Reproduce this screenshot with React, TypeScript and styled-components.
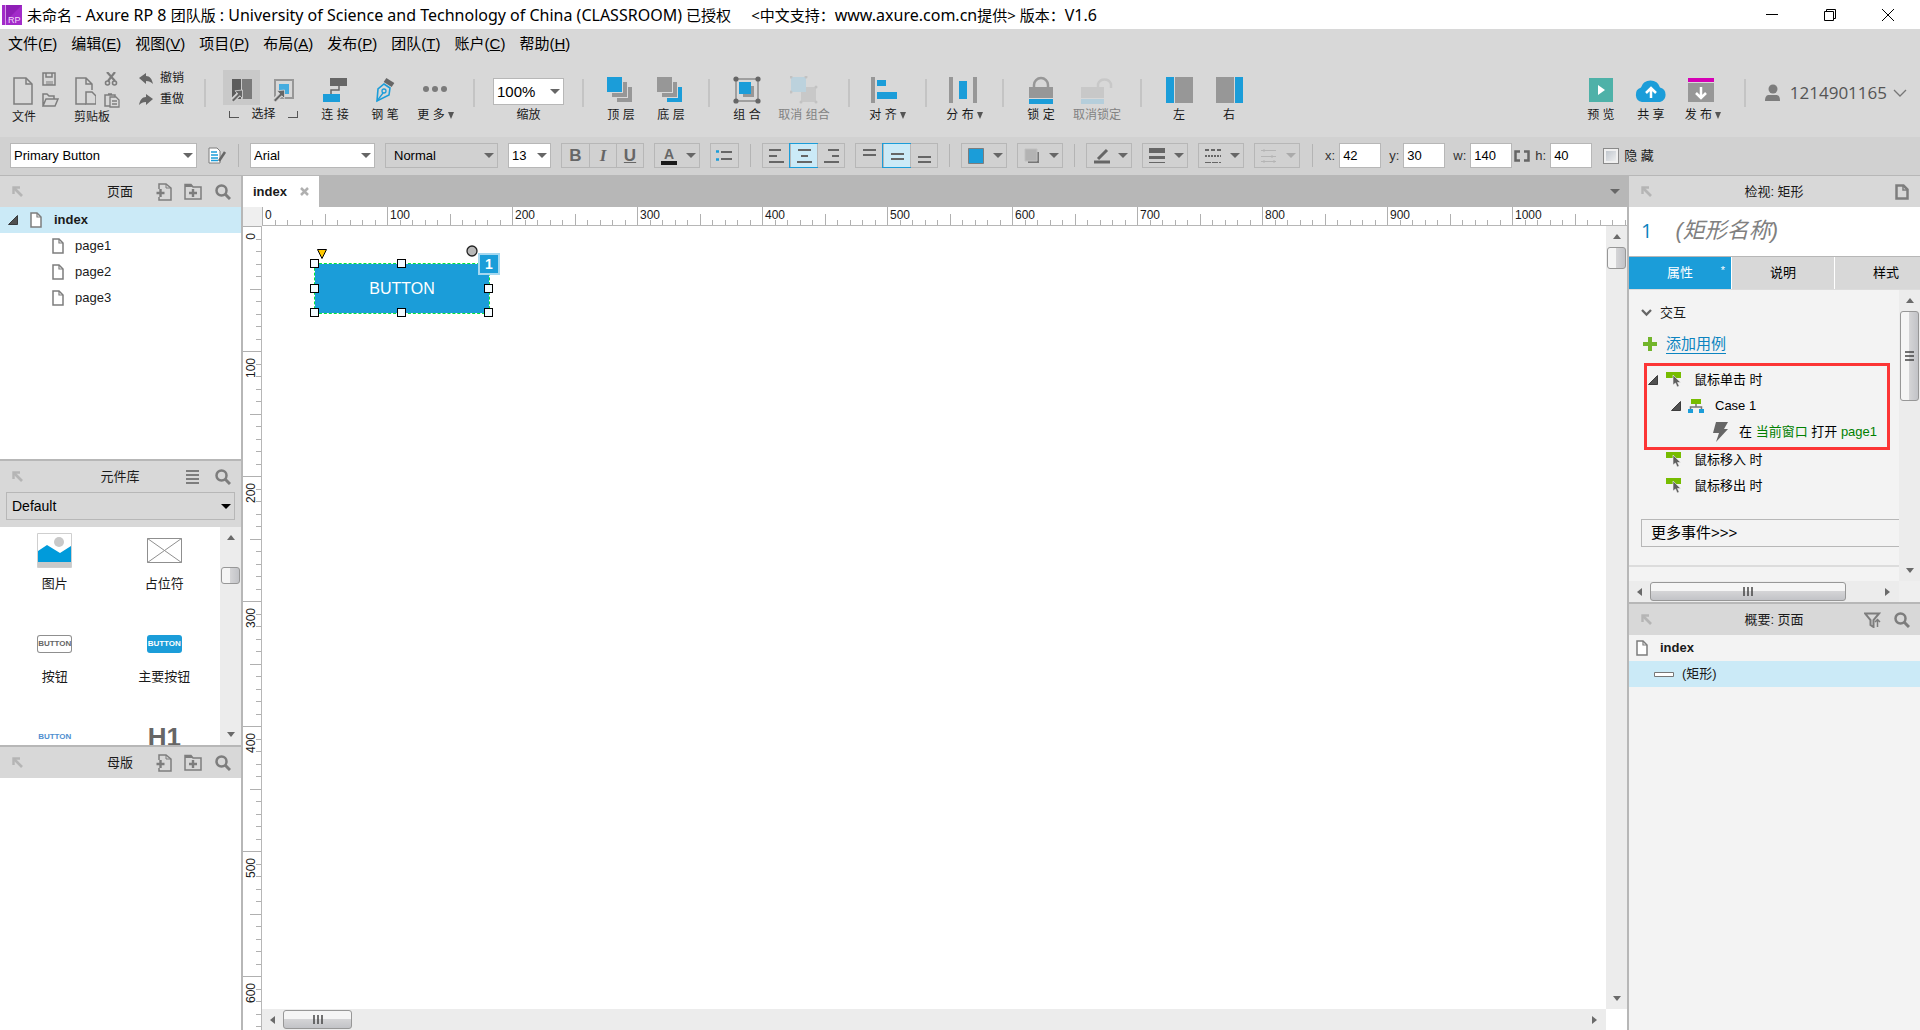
import React, { useEffect, useState } from "react";
import styled, { createGlobalStyle, css } from "styled-components";

const C = {
  bar: "#d8d8d8",
  format: "#d1d1d1",
  line: "#b7b7b7",
  blue: "#1b9dd9",
  pale: "#cbeaf7",
  grey: "#979797",
  dark: "#666666",
  mid: "#7d7d7d",
  soft: "#f3f3f3",
  green: "#76bc00",
};

const Global = createGlobalStyle`
  *, *::before, *::after { box-sizing: border-box; }
  body { margin: 0; background: #fff; }
  body, button, input, select {
    font-family: "Liberation Sans", "Noto Sans CJK SC", sans-serif;
    font-size: 13px;
    line-height: 20px;
    color: #1a1a1a;
  }
  button { border: 0; padding: 0; margin: 0; background: none; display: block; }
  svg { display: block; flex: none; }
`;

/* ---------- frame ---------- */
const Window = styled.div`
  display: flex;
  flex-direction: column;
  height: 100vh;
  overflow: hidden;
`;
const TitleBar = styled.header`
  display: flex;
  align-items: center;
  height: 29px;
  flex: none;
  padding: 0 3px 0 2px;
  background: #fff;
`;
const Title = styled.h1`
  margin: 0 0 0 5px;
  font: 400 15px/28px "Noto Sans", "Noto Sans CJK SC", sans-serif;
  color: #000;
  white-space: pre;
  flex: 1;
`;
const Latin = styled.span`
  font-size: 16px;
  line-height: 20px;
`;
const TitleNote = styled.span`
  margin-left: 20px;
`;
const WindowButton = styled.button`
  width: 58px;
  height: 28px;
  display: grid;
  place-items: center;
`;
const MenuBar = styled.nav`
  display: flex;
  gap: 14px;
  height: 31px;
  flex: none;
  padding: 0 8px;
  background: ${C.bar};
`;
const MenuItem = styled.button`
  height: 29px;
  font-size: 15px;
  line-height: 29px;
  white-space: nowrap;
  color: #000;
`;

/* ---------- tool bar ---------- */
const ToolBar = styled.div`
  display: flex;
  height: 77px;
  flex: none;
  padding: 0 13px 0 12px;
  background: ${C.bar};
`;
const Spring = styled.div`
  flex: 1;
`;
const Divider = styled.div<{ $x?: number }>`
  width: 2px;
  height: 28px;
  margin: 19px ${(p) => p.$x ?? 12}px 0;
  background: #c4c4c4;
  flex: none;
`;
const Tool = styled.button<{ $w?: number; $off?: boolean }>`
  display: flex;
  flex-direction: column;
  align-items: center;
  width: ${(p) => p.$w ?? 50}px;
  height: 77px;
  padding-top: 14px;
  font-size: 12px;
  line-height: 18px;
  white-space: nowrap;
  flex: none;
  color: ${(p) => (p.$off ? "#828282" : "#1a1a1a")};
`;
const ToolIcon = styled.span`
  display: grid;
  place-items: center;
  height: 32px;
`;
const ToolLabel = styled.span`
  display: flex;
  align-items: center;
  gap: 3px;
`;
const FileGroup = styled.div<{ $w: number }>`
  width: ${(p) => p.$w}px;
  padding-top: 8px;
  flex: none;
  font-size: 12px;
  line-height: 18px;
`;
const FileIcons = styled.div`
  display: flex;
  gap: 8px;
  height: 40px;
  align-items: flex-end;
`;
const IconStack = styled.div`
  display: flex;
  flex-direction: column;
  gap: 6px;
`;
const HistoryGroup = styled.div`
  width: 48px;
  padding-top: 8px;
  flex: none;
`;
const HistoryButton = styled.button`
  display: flex;
  align-items: center;
  gap: 7px;
  height: 21px;
  font-size: 12px;
  line-height: 21px;
  white-space: nowrap;
`;
const SelectGroup = styled.div`
  width: 80px;
  padding-top: 10px;
  margin-right: 7px;
  flex: none;
`;
const SelectModes = styled.div`
  display: flex;
  gap: 5px;
`;
const ModeButton = styled.button<{ $on?: boolean }>`
  width: 37px;
  height: 35px;
  display: grid;
  place-items: center;
  background: ${(p) => (p.$on ? "#c9c9c9" : "transparent")};
`;
const SelectCaption = styled.div`
  display: flex;
  justify-content: space-between;
  align-items: center;
  width: 69px;
  margin-left: 6px;
  font-size: 12px;
  line-height: 18px;
`;
const Bracket = styled.span<{ $right?: boolean }>`
  width: 10px;
  height: 7px;
  border-bottom: 1px solid #555;
  ${(p) => (p.$right ? css`border-right: 1px solid #555;` : css`border-left: 1px solid #555;`)}
`;
const ZoomGroup = styled.label`
  display: flex;
  flex-direction: column;
  align-items: center;
  width: 71px;
  padding-top: 18px;
  margin: 0 6px;
  flex: none;
  font-size: 12px;
  line-height: 20px;
`;
const Account = styled.button`
  display: flex;
  align-items: center;
  gap: 6px;
  height: 65px;
  font: 400 17px/24px "Open Sans", sans-serif;
  color: #555;
`;
const AccountName = styled.span`
  margin-left: 2px;
`;

/* ---------- format bar ---------- */
const FormatBar = styled.div`
  display: flex;
  align-items: center;
  height: 39px;
  flex: none;
  padding: 0 10px 1px;
  gap: 10px;
  background: ${C.format};
  border-bottom: 1px solid ${C.line};
`;
const FormatRule = styled.div<{ $wide?: boolean }>`
  width: 1px;
  height: 23px;
  margin: 0 ${(p) => (p.$wide ? 2 : 1)}px;
  background: #b4b4b4;
`;
const Combo = styled.span<{ $w: number; $h?: number; $plain?: boolean; $fill?: boolean }>`
  display: grid;
  width: ${(p) => (p.$fill ? "100%" : `${p.$w}px`)};
  height: ${(p) => p.$h ?? 25}px;
  border: 1px solid ${C.line};
  background: ${(p) => (p.$plain ? "transparent" : "#fff")};
  flex: none;
  align-items: center;
`;
const ComboField = styled.select<{ $size?: number; $pad?: number }>`
  grid-area: 1 / 1;
  width: 100%;
  height: 100%;
  appearance: none;
  border: 0;
  background: none;
  padding: 0 0 0 ${(p) => p.$pad ?? 3}px;
  font-size: ${(p) => p.$size ?? 13}px;
  color: #000;
`;
const Caret = styled.span<{ $c?: string }>`
  width: 0;
  height: 0;
  border: 5px solid transparent;
  border-top-color: ${(p) => p.$c ?? C.dark};
  border-bottom: 0;
  flex: none;
`;
const ComboCaret = styled(Caret)`
  grid-area: 1 / 1;
  justify-self: end;
  margin-right: 3px;
  pointer-events: none;
`;
const SmallCaret = styled.span`
  border: 3px solid transparent;
  border-top: 7px solid #555;
  border-bottom: 0;
`;
const Segments = styled.div`
  display: flex;
  height: 25px;
  border: 1px solid ${C.line};
`;
const Segment = styled.button<{ $on?: boolean }>`
  width: 27px;
  height: 23px;
  display: grid;
  place-items: center;
  font-size: 17px;
  font-weight: 700;
  line-height: 23px;
  color: ${C.dark};
  & + & { border-left: 1px solid ${C.line}; }
  ${(p) =>
    p.$on &&
    css`
      background: ${C.pale};
      outline: 1px solid ${C.blue};
    `}
`;
const Serif = styled.i`
  font-family: "Liberation Serif", serif;
`;
const DropTool = styled.button`
  display: flex;
  align-items: center;
  justify-content: space-between;
  width: 46px;
  height: 25px;
  padding: 0 3px 0 6px;
  border: 1px solid ${C.line};
  flex: none;
`;
const Coord = styled.label`
  display: flex;
  align-items: center;
  gap: 4px;
  margin-right: -2px;
  color: #333;
`;
const CoordField = styled.input`
  width: 42px;
  height: 25px;
  border: 1px solid ${C.line};
  background: #fff;
  padding: 0 0 0 3px;
  color: #000;
`;
const Ratio = styled.span`
  margin: 0 -5px 0 -6px;
`;
const Hide = styled.label`
  display: flex;
  align-items: center;
  gap: 5px;
  margin-left: 3px;
  white-space: nowrap;
`;
const Tick = styled.input`
  appearance: none;
  width: 16px;
  height: 16px;
  margin: 0;
  border: 1px solid #8a8a8a;
  outline: 2px solid #f0f0f0;
  outline-offset: -3px;
  background: linear-gradient(135deg, #b9c0c8, #f4f4f4);
`;

/* ---------- panels ---------- */
const Work = styled.main`
  display: flex;
  flex: 1;
  min-height: 0;
`;
const Side = styled.aside<{ $right?: boolean }>`
  display: flex;
  flex-direction: column;
  width: ${(p) => (p.$right ? 293 : 243)}px;
  flex: none;
  background: ${(p) => (p.$right ? C.soft : "#fff")};
  ${(p) => (p.$right ? css`border-left: 2px solid ${C.line};` : css`border-right: 2px solid ${C.line};`)}
`;
const Panel = styled.section<{ $h?: number }>`
  display: flex;
  flex-direction: column;
  min-height: 0;
  overflow: hidden;
  ${(p) => (p.$h ? css`height: ${p.$h}px; flex: none; border-bottom: 2px solid ${C.line};` : css`flex: 1;`)}
`;
const PanelHead = styled.div`
  display: grid;
  grid-template-columns: 1fr auto 1fr;
  align-items: center;
  height: 31px;
  flex: none;
  padding: 0 9px 0 8px;
  background: ${C.bar};
  > svg { margin-left: 4px; }
`;
const PanelTitle = styled.h2`
  margin: 0;
  font-size: 13px;
  font-weight: 400;
  line-height: 20px;
`;
const HeadTools = styled.div`
  display: flex;
  justify-content: flex-end;
  gap: 12px;
`;
const HeadButton = styled.button`
  width: 18px;
  height: 18px;
  display: grid;
  place-items: center;
`;
const TreeRow = styled.div<{ $level?: number; $on?: boolean; $bold?: boolean; $gap?: number }>`
  display: flex;
  align-items: center;
  gap: ${(p) => p.$gap ?? 11}px;
  height: 26px;
  flex: none;
  padding-left: ${(p) => p.$level ?? 8}px;
  background: ${(p) => (p.$on ? C.pale : "transparent")};
  font-weight: ${(p) => (p.$bold ? 700 : 400)};
  white-space: nowrap;
`;
const LibraryPick = styled.div`
  padding: 0 6px 7px;
  background: ${C.bar};
`;
const LibraryBody = styled.div`
  display: flex;
  flex: 1;
  min-height: 0;
`;
const LibraryGrid = styled.div`
  display: grid;
  grid-template-columns: 1fr 1fr;
  grid-auto-rows: 61px;
  row-gap: 32px;
  flex: 1;
  padding: 6px 1px 0 0;
  overflow: hidden;
`;
const LibraryItem = styled.button`
  display: flex;
  flex-direction: column;
  align-items: center;
  gap: 6px;
  line-height: 20px;
`;
const LibraryIcon = styled.span`
  display: grid;
  place-items: center;
  height: 35px;
`;
const MiniButton = styled.span<{ $kind: "plain" | "primary" | "link" }>`
  width: 35px;
  height: 18px;
  border-radius: 3px;
  font-size: 8px;
  font-weight: 700;
  line-height: 18px;
  text-align: center;
  ${(p) => p.$kind === "plain" && css`box-shadow: inset 0 0 0 1px #8f8f8f; color: #666;`}
  ${(p) => p.$kind === "primary" && css`background: ${C.blue}; color: #fff;`}
  ${(p) => p.$kind === "link" && css`color: #4f8fd0;`}
`;
const Heading1 = styled.span`
  font-size: 26px;
  font-weight: 700;
  color: #666;
`;

/* ---------- scroll bars ---------- */
const Scroll = styled.div<{ $across?: boolean }>`
  display: flex;
  flex: none;
  background: #ececec;
  ${(p) =>
    p.$across
      ? css`height: 21px; padding: 0 1px; align-items: center;`
      : css`width: 21px; flex-direction: column; align-items: center;`}
`;
const ScrollButton = styled.button`
  width: 20px;
  height: 21px;
  display: grid;
  place-items: center;
  flex: none;
`;
const Thumb = styled.div<{ $len: number; $gap?: number; $across?: boolean }>`
  display: grid;
  place-items: center;
  border: 1px solid #979797;
  border-radius: 3px;
  flex: none;
  ${(p) =>
    p.$across
      ? css`
          width: ${p.$len}px;
          height: 19px;
          margin-left: ${p.$gap ?? 0}px;
          background: linear-gradient(#f5f5f5 0 45%, #d4d4d6 50%, #c2c3c7);
        `
      : css`
          height: ${p.$len}px;
          width: 19px;
          margin-top: ${p.$gap ?? 0}px;
          background: linear-gradient(90deg, #f5f5f5 0 45%, #d4d4d6 50%, #c2c3c7);
        `}
`;
const ScrollCorner = styled.div`
  background: #efefef;
`;

/* ---------- canvas ---------- */
const Center = styled.section`
  display: flex;
  flex-direction: column;
  flex: 1;
  min-width: 0;
`;
const TabStrip = styled.div`
  display: flex;
  align-items: center;
  height: 31px;
  flex: none;
  padding-right: 7px;
  background: ${C.line};
`;
const PageTab = styled.div`
  display: flex;
  align-items: center;
  gap: 13px;
  height: 31px;
  padding: 0 10px;
  background: #fff;
  font-weight: 700;
`;
const Board = styled.div`
  display: grid;
  grid-template-columns: 19px 1fr 21px;
  grid-template-rows: 19px 1fr 21px;
  flex: 1;
  min-height: 0;
`;
const RulerAcross = styled.div`
  grid-area: 1 / 2 / 2 / 4;
  display: flex;
  overflow: hidden;
  border-bottom: 1px solid ${C.line};
`;
const RulerDown = styled.div`
  grid-area: 2 / 1 / 4 / 2;
  display: flex;
  flex-direction: column;
  overflow: hidden;
  border-right: 1px solid ${C.line};
`;
const RulerCell = styled.div<{ $down?: boolean }>`
  display: grid;
  flex: none;
  font-size: 12px;
  line-height: 12px;
  ${(p) => (p.$down ? css`height: 125px; width: 18px;` : css`width: 125px; height: 18px;`)}
  > * { grid-area: 1 / 1; }
`;
const RulerLabel = styled.span<{ $down?: boolean }>`
  ${(p) =>
    p.$down
      ? css`
          writing-mode: vertical-rl;
          transform: rotate(180deg);
          justify-self: start;
          align-self: start;
          margin: 7px 0 0 2px;
        `
      : css`
          justify-self: start;
          align-self: start;
          margin: 2px 0 0 3px;
        `}
`;
const Canvas = styled.div`
  grid-area: 2 / 2;
  position: relative;
  overflow: hidden;
  background: #fff;
`;
const Shape = styled.div`
  position: absolute;
  left: 53px;
  top: 38px;
  width: 174px;
  height: 49px;
  background: ${C.blue};
  outline: 1px dashed #00e83a;
  color: #fff;
  font-size: 16px;
  line-height: 50px;
  text-align: center;
`;
const Handle = styled.span<{ $x: string; $y: string }>`
  position: absolute;
  left: ${(p) => p.$x};
  top: ${(p) => p.$y};
  width: 9px;
  height: 9px;
  margin: -5px 0 0 -5px;
  border: 1px solid #000;
  background: #f4fbff;
`;
const Note = styled.span`
  position: absolute;
  left: 163px;
  top: -11px;
  width: 22px;
  height: 22px;
  border: 2px solid #a5d8f0;
  background: ${C.blue};
  font-size: 14px;
  font-weight: 700;
  line-height: 18px;
`;
const Knob = styled.svg<{ $x: number; $y: number }>`
  position: absolute;
  left: ${(p) => p.$x}px;
  top: ${(p) => p.$y}px;
`;
const ScrollSlot = styled.div<{ $across?: boolean }>`
  display: grid;
  grid-area: ${(p) => (p.$across ? "3 / 2" : "2 / 3")};
`;

/* ---------- inspector ---------- */
const NameRow = styled.label`
  display: flex;
  align-items: center;
  gap: 20px;
  height: 50px;
  flex: none;
  padding: 0 0 2px 12px;
  background: #fff;
  border-bottom: 1px solid ${C.line};
  font: 400 20px/30px "Open Sans", sans-serif;
  color: #0c84c0;
`;
const NameField = styled.input`
  width: 200px;
  height: 36px;
  border: 0;
  padding: 0 0 0 3px;
  background: none;
  font-size: 22px;
  font-style: italic;
  line-height: 36px;
  &::placeholder { color: #808080; opacity: 1; }
`;
const Tabs = styled.div`
  display: flex;
  gap: 1px;
  height: 33px;
  flex: none;
  overflow: hidden;
  border-bottom: 1px solid #dcdcdc;
  background: #fff;
`;
const TabButton = styled.button<{ $on?: boolean }>`
  display: grid;
  grid-template-columns: 1fr auto 1fr;
  align-items: center;
  width: 102px;
  flex: none;
  line-height: 32px;
  background: ${(p) => (p.$on ? C.blue : C.bar)};
  color: ${(p) => (p.$on ? "#fff" : "#000")};
`;
const Star = styled.sup`
  justify-self: end;
  align-self: start;
  padding-right: 6px;
  line-height: 26px;
`;
const InspectorBody = styled.div`
  display: flex;
  flex: 1;
  min-height: 0;
`;
const InspectorMain = styled.div`
  display: flex;
  flex-direction: column;
  flex: 1;
  min-width: 0;
`;
const InspectorScroll = styled.div`
  display: grid;
  grid-template-rows: 1fr 21px;
  width: 21px;
  flex: none;
`;
const Properties = styled.div`
  flex: 1;
  padding-top: 12px;
  overflow: hidden;
`;
const SectionRow = styled.h3`
  display: flex;
  align-items: center;
  gap: 8px;
  height: 22px;
  margin: 0 0 9px 12px;
  font-size: 13px;
  font-weight: 400;
`;
const AddCase = styled.a`
  display: flex;
  align-items: center;
  gap: 9px;
  width: max-content;
  height: 22px;
  margin: 0 0 8px 14px;
  font-size: 15px;
  line-height: 18px;
  color: #0c84c0;
  text-decoration: none;
`;
const LinkText = styled.span`
  border-bottom: 1px solid #0c84c0;
`;
const Highlight = styled.div`
  width: 246px;
  height: 87px;
  margin: 0 0 -3px 15px;
  padding: 1px 0 2px;
  border: 3px solid #fc3535;
`;
const CaseText = styled.span<{ $gap?: number }>`
  margin-left: ${(p) => p.$gap ?? 0}px;
  color: #000;
`;
const Em = styled.span`
  color: #008000;
`;
const MoreEvents = styled.button`
  width: 100%;
  height: 28px;
  margin: 20px 0 18px 12px;
  padding-left: 9px;
  border: 1px solid ${C.line};
  font-size: 15px;
  line-height: 26px;
  text-align: left;
  color: #000;
`;
const Rule = styled.div`
  height: 2px;
  background: #dcdcdc;
`;

/* ---------- icons ---------- */
type SvgProps = { w: number; h: number; children: React.ReactNode };
const Svg = ({ w, h, children }: SvgProps) => (
  <svg width={w} height={h} viewBox={`0 0 ${w} ${h}`} fill="none" aria-hidden="true">
    {children}
  </svg>
);
const Arrow = ({ d }: { d: "up" | "down" | "left" | "right" }) => {
  const path = {
    up: "M0 6 L4 1 L8 6Z",
    down: "M0 1 L4 6 L8 1Z",
    left: "M6 0 L1 4 L6 8Z",
    right: "M1 0 L6 4 L1 8Z",
  }[d];
  return (
    <Svg w={8} h={8}>
      <path d={path} fill="#6a6a6a" />
    </Svg>
  );
};
const PageIcon = () => (
  <Svg w={12} h={16}>
    <path d="M1 1h6l4 4v10H1z" fill="#fff" stroke={C.mid} strokeWidth="1.5" />
    <path d="M7 1v4h4" stroke={C.mid} strokeWidth="1.2" />
  </Svg>
);
const DockIcon = () => (
  <Svg w={11} h={11}>
    <path d="M1.5 8V1.5H8" stroke="#b5b5b5" strokeWidth="2.4" />
    <path d="M2 2l8 8" stroke="#b5b5b5" strokeWidth="2.6" />
  </Svg>
);
const SearchIcon = () => (
  <Svg w={16} h={16}>
    <circle cx="6.5" cy="6.5" r="5" stroke={C.mid} strokeWidth="2.5" />
    <path d="M10 10l5 5" stroke={C.mid} strokeWidth="3" />
  </Svg>
);
const AddPageIcon = () => (
  <Svg w={17} h={18}>
    <path d="M4 6V1h7l5 4v12H4v-3" stroke={C.mid} strokeWidth="1.5" />
    <path d="M11 1v4h5" stroke={C.mid} />
    <path d="M5.5 6v8M1.5 10h8" stroke={C.mid} strokeWidth="2.4" />
  </Svg>
);
const AddFolderIcon = () => (
  <Svg w={18} h={17}>
    <path d="M1 16V1.5h6l2 2.5h8v12z" stroke={C.mid} strokeWidth="1.5" />
    <path d="M1 3h7" stroke={C.mid} strokeWidth="2" />
    <path d="M9 6v8M5 10h8" stroke={C.mid} strokeWidth="2.4" />
  </Svg>
);
const Tri = () => (
  <Svg w={10} h={10}>
    <path d="M9.5 .5v9H.5z" fill="#505050" stroke="#222" strokeWidth=".8" />
  </Svg>
);
const EventIcon = () => (
  <Svg w={16} h={16}>
    <path d="M0 0h15v6H0z" fill={C.green} />
    <path d="M7 3v10l2.5-2 1.7 4 2-1-1.7-3.5h3.2z" fill="#5f5f5f" stroke="#f3f3f3" strokeWidth=".6" />
  </Svg>
);
const CaseIcon = () => (
  <Svg w={16} h={15}>
    <path d="M3 0h10v5H3z" fill={C.green} />
    <path d="M8 5v3M2.5 11V8h11v3" stroke="#777" strokeWidth="1.5" />
    <path d="M0 10h5v4H0zM11 10h5v4h-5z" fill={C.blue} />
  </Svg>
);
const DiagCursor = ({ y }: { y: number }) => (
  <g transform={`translate(0 ${y})`}>
    <path d="M1 12L8 5" stroke="#d8d8d8" strokeWidth="5" />
    <path d="M11.5 1v8.5L8.7 6.7 2.5 13 .5 11l6.3-6.2L4 1.8z" fill={C.dark} stroke="#d8d8d8" strokeWidth=".8" />
  </g>
);
const Lines = ({ rows }: { rows: [number, number, number][] }) => (
  <Svg w={17} h={16}>
    {rows.map(([x, y, w]) => (
      <path key={y} d={`M${x} ${y}h${w}`} stroke={C.dark} strokeWidth="2" />
    ))}
  </Svg>
);
const Copies = ({ top, under }: { top: string; under: string }) => (
  <Svg w={28} h={26}>
    <path d="M0 0h15v15H0z" fill={top} />
    <path d="M16 5h4v15H5v-4h11z" fill={C.grey} />
    <path d="M21 10h4v15H10v-4h11z" fill={under} />
  </Svg>
);
const Grip = ({ down }: { down?: boolean }) => (
  <Svg w={10} h={10}>
    {[1, 5, 9].map((n) => (
      <path key={n} d={down ? `M0 ${n}h9` : `M${n} 0v9`} stroke="#444" strokeWidth="1.5" />
    ))}
  </Svg>
);

/* ---------- pieces ---------- */
const menus = [
  ["文件", "F"], ["编辑", "E"], ["视图", "V"], ["项目", "P"], ["布局", "A"],
  ["发布", "P"], ["团队", "T"], ["账户", "C"], ["帮助", "H"],
];

type ToolButtonProps = { label: string; w?: number; off?: boolean; drop?: boolean; children: React.ReactNode };
const ToolButton = ({ label, w, off, drop, children }: ToolButtonProps) => (
  <Tool $w={w} $off={off}>
    <ToolIcon>{children}</ToolIcon>
    <ToolLabel>
      {label}
      {drop && <SmallCaret />}
    </ToolLabel>
  </Tool>
);

type PickProps = {
  id: string; value: string; w: number; h?: number; size?: number;
  pad?: number; plain?: boolean; fill?: boolean; caret?: string;
};
const Pick = ({ id, value, w, h, size, pad, plain, fill, caret }: PickProps) => (
  <Combo $w={w} $h={h} $plain={plain} $fill={fill}>
    <ComboField id={id} aria-label={id} $size={size} $pad={pad} defaultValue={value}>
      <option>{value}</option>
    </ComboField>
    <ComboCaret $c={caret} />
  </Combo>
);

const Drop = ({ name, off, children }: { name: string; off?: boolean; children: React.ReactNode }) => (
  <DropTool aria-label={name}>
    {children}
    <Caret $c={off ? "#aaa" : C.dark} />
  </DropTool>
);

const Head = ({ title, children }: { title: string; children: React.ReactNode }) => (
  <PanelHead>
    <DockIcon />
    <PanelTitle>{title}</PanelTitle>
    <HeadTools>{children}</HeadTools>
  </PanelHead>
);

const Bar = ({ across, len, gap, grip }: { across?: boolean; len: number; gap?: number; grip?: boolean }) => (
  <Scroll $across={across}>
    <ScrollButton aria-label="back"><Arrow d={across ? "left" : "up"} /></ScrollButton>
    <Thumb $across={across} $len={len} $gap={gap}>{grip && <Grip down={!across} />}</Thumb>
    <Spring />
    <ScrollButton aria-label="forward"><Arrow d={across ? "right" : "down"} /></ScrollButton>
  </Scroll>
);

const CELL = 125;
const steps = Array.from({ length: 10 }, (_, i) => i);
const tickLength = (i: number) => (i === 0 ? 18 : i === 5 ? 11 : 5);
const RulerSegment = ({ value, down }: { value: number; down?: boolean }) => (
  <RulerCell $down={down}>
    <Svg w={down ? 18 : CELL} h={down ? CELL : 18}>
      {steps.map((i) => {
        const at = Math.round((i * CELL) / 10) + 0.5;
        const from = 18 - tickLength(i);
        return <path key={i} d={down ? `M${from} ${at}H18` : `M${at} ${from}V18`} stroke="#b0b0b0" />;
      })}
    </Svg>
    <RulerLabel $down={down}>{value}</RulerLabel>
  </RulerCell>
);

// Number of ruler segments that fit beside the panels and below the bars.
const countCells = () => ({
  across: Math.max(1, Math.ceil((window.innerWidth - 555) / CELL)),
  down: Math.max(1, Math.ceil((window.innerHeight - 226) / CELL)),
});
const range = (n: number) => Array.from({ length: n }, (_, i) => i * 100);

const handles = [
  ["0%", "0%"], ["50%", "0%"], ["0%", "50%"], ["100%", "50%"],
  ["0%", "100%"], ["50%", "100%"], ["100%", "100%"],
];

const coords = [["x", "42"], ["y", "30"], ["w", "140"], ["h", "40"]];

export default function App() {
  const [cells, setCells] = useState(countCells);
  useEffect(() => {
    const update = () => setCells(countCells());
    window.addEventListener("resize", update);
    return () => window.removeEventListener("resize", update);
  }, []);

  return (
    <Window>
      <Global />
      <TitleBar>
        <Svg w={20} h={20}>
          <path d="M0 0h20v20H0z" fill="#a22bc9" />
          <path d="M4 0h16L4 16z" fill="#8f1fb6" />
          <path d="M3.5 0v20" stroke="#d59be6" />
          <text x="6" y="18" fontFamily="Liberation Sans" fontSize="9" fill="#f3dcfa">RP</text>
        </Svg>
        <Title>
          未命名<Latin> - Axure RP 8 </Latin>团队版
          <Latin> : University of Science and Technology of China (CLASSROOM) </Latin>已授权
          <TitleNote>
            &lt;中文支持：<Latin>www.axure.com.cn</Latin>提供&gt; 版本：<Latin>V1.6</Latin>
          </TitleNote>
        </Title>
        <WindowButton aria-label="minimize">
          <Svg w={12} h={12}><path d="M0 5.5h12" stroke="#000" /></Svg>
        </WindowButton>
        <WindowButton aria-label="restore">
          <Svg w={12} h={12}><path d="M.5 2.5h9v9h-9zM2.5 2.5v-2h9v9h-2" stroke="#000" /></Svg>
        </WindowButton>
        <WindowButton aria-label="close">
          <Svg w={12} h={12}><path d="M0 0l12 12M12 0L0 12" stroke="#000" /></Svg>
        </WindowButton>
      </TitleBar>

      <MenuBar>
        {menus.map(([name, key]) => (
          <MenuItem key={name}>{name}(<u>{key}</u>)</MenuItem>
        ))}
      </MenuBar>

      <ToolBar>
        <FileGroup $w={62}>
          <FileIcons>
            <Svg w={22} h={34}>
              <path d="M2 4h12l6 6v20H2z" stroke={C.mid} strokeWidth="1.5" />
              <path d="M14 4v6h6" stroke={C.mid} strokeWidth="1.5" />
            </Svg>
            <IconStack>
              <Svg w={17} h={15}>
                <path d="M1 1h12v12H1zM4 1v4h6V1" stroke={C.mid} strokeWidth="1.5" />
                <path d="M4 10h7M4 12h7" stroke={C.mid} />
              </Svg>
              <Svg w={17} h={15}>
                <path d="M1 13V1h4l2 2h5v3M1 13l3-7h12l-3 7z" stroke={C.mid} strokeWidth="1.5" />
              </Svg>
            </IconStack>
          </FileIcons>
          文件
        </FileGroup>
        <FileGroup $w={65}>
          <FileIcons>
            <Svg w={22} h={34}>
              <path d="M12 30H2V4h10l6 6v6M12 4v6h6" stroke={C.mid} strokeWidth="1.5" />
              <path d="M12 18h6l4 4v8H12z" stroke={C.mid} strokeWidth="1.5" />
            </Svg>
            <IconStack>
              <Svg w={16} h={15}>
                <path d="M3 0l8 9M11 0L4 9" stroke={C.mid} strokeWidth="2.2" />
                <circle cx="3.5" cy="11" r="2" stroke={C.mid} strokeWidth="1.6" />
                <circle cx="10.5" cy="11" r="2" stroke={C.mid} strokeWidth="1.6" />
              </Svg>
              <Svg w={16} h={15}>
                <path d="M6 13H1V2h10v2M4 1h4" stroke={C.mid} strokeWidth="1.5" />
                <path d="M6 4h6l3 3v7H6zM8 8h5M8 11h5" stroke={C.mid} strokeWidth="1.3" />
              </Svg>
            </IconStack>
          </FileIcons>
          剪贴板
        </FileGroup>
        <HistoryGroup>
          <HistoryButton>
            <Svg w={14} h={12}><path d="M0 5l7-5v3c4 0 6 3 7 8-2-2-4-3-7-3v3z" fill={C.dark} /></Svg>
            撤销
          </HistoryButton>
          <HistoryButton>
            <Svg w={14} h={12}><path d="M14 5L7 0v3C3 3 1 6 0 11c2-2 4-3 7-3v3z" fill={C.dark} /></Svg>
            重做
          </HistoryButton>
        </HistoryGroup>
        <Divider $x={17} />
        <SelectGroup>
          <SelectModes>
            <ModeButton $on aria-label="相交选择">
              <Svg w={22} h={28}>
                <path d="M1 5h9v20H1z" fill="#5c5c5c" /><path d="M11 5h10v20H11z" fill="#7a7a7a" />
                <DiagCursor y={15} />
              </Svg>
            </ModeButton>
            <ModeButton aria-label="包含选择">
              <Svg w={22} h={28}>
                <path d="M2 6h18v18H2z" stroke={C.grey} strokeWidth="2" />
                <path d="M6 10h10v10H6z" fill="#45acdf" />
                <DiagCursor y={15} />
              </Svg>
            </ModeButton>
          </SelectModes>
          <SelectCaption><Bracket />选择<Bracket $right /></SelectCaption>
        </SelectGroup>
        <ToolButton label="连 接">
          <Svg w={26} h={24}>
            <path d="M8 0h17v8H8z" fill={C.dark} /><path d="M1 16h17v8H1z" fill={C.blue} />
            <path d="M17 8v4H9v4" stroke={C.dark} strokeWidth="1.5" />
          </Svg>
        </ToolButton>
        <ToolButton label="钢 笔">
          <Svg w={20} h={26}>
            <path d="M2 24L3 12l6-5 6 4-1 7z" stroke={C.blue} strokeWidth="1.6" />
            <path d="M2 24l6-8" stroke={C.blue} strokeWidth="1.3" />
            <circle cx="9" cy="14" r="2" stroke={C.blue} strokeWidth="1.3" />
            <path d="M10 3l8 5" stroke={C.dark} strokeWidth="5" />
          </Svg>
        </ToolButton>
        <ToolButton label="更 多" w={51} drop>
          <Svg w={28} h={8}>
            {[4, 13, 22].map((x) => <circle key={x} cx={x} cy="3" r="3" fill="#7b7b7b" />)}
          </Svg>
        </ToolButton>
        <Divider />
        <ZoomGroup>
          <Pick id="zoom" value="100%" w={71} h={27} size={15} />
          缩放
        </ZoomGroup>
        <Divider />
        <ToolButton label="顶 层"><Copies top={C.blue} under={C.grey} /></ToolButton>
        <ToolButton label="底 层"><Copies top={C.grey} under={C.blue} /></ToolButton>
        <Divider />
        <ToolButton label="组 合">
          <Svg w={28} h={28}>
            <path d="M3 3h22v22H3z" stroke={C.dark} />
            <path d="M10 10h11v11H10z" fill={C.grey} /><path d="M6 6h12v12H6z" fill={C.blue} />
            {[3, 25].map((x) => [3, 25].map((y) => <circle key={`${x}-${y}`} cx={x} cy={y} r="2.6" fill={C.dark} />))}
          </Svg>
        </ToolButton>
        <ToolButton label="取消 组合" w={64} off>
          <Svg w={28} h={28}>
            <path d="M11 11h15v15H11z" fill="#c8c8c8" /><path d="M1 1h15v15H1z" fill="#bcd2dd" />
            {[[1, 1], [16, 1], [1, 16], [26, 11], [11, 26], [26, 26]].map(([x, y]) => (
              <circle key={`${x}-${y}`} cx={x} cy={y} r="1.5" fill="#c2c2c2" />
            ))}
          </Svg>
        </ToolButton>
        <Divider />
        <ToolButton label="对 齐" w={51} drop>
          <Svg w={34} h={26}>
            <path d="M0 0h4v26H0z" fill={C.grey} />
            <path d="M6 3h9v6H6zM6 15h20v7H6z" fill={C.blue} />
          </Svg>
        </ToolButton>
        <Divider />
        <ToolButton label="分 布" w={51} drop>
          <Svg w={32} h={26}>
            <path d="M0 0h4v26H0zM24 0h4v26h-4z" fill={C.grey} />
            <path d="M10 4h8v18h-8z" fill={C.blue} />
          </Svg>
        </ToolButton>
        <Divider />
        <ToolButton label="锁 定">
          <Svg w={24} h={28}>
            <path d="M5 11V9a7 7 0 0 1 14 0v2" stroke={C.grey} strokeWidth="2.5" />
            <path d="M0 11h24v11H0z" fill={C.grey} /><path d="M0 23h24v5H0z" fill={C.blue} />
          </Svg>
        </ToolButton>
        <ToolButton label="取消锁定" w={62} off>
          <Svg w={32} h={28}>
            <path d="M17 11V8a7 7 0 0 1 13 0v4" stroke="#c8c8c8" strokeWidth="2.5" />
            <path d="M0 11h23v11H0z" fill="#c8c8c8" /><path d="M0 23h23v5H0z" fill="#b5cedb" />
          </Svg>
        </ToolButton>
        <Divider />
        <ToolButton label="左">
          <Svg w={27} h={26}><path d="M0 0h8v26H0z" fill={C.blue} /><path d="M9 0h18v26H9z" fill={C.grey} /></Svg>
        </ToolButton>
        <ToolButton label="右">
          <Svg w={27} h={26}><path d="M19 0h8v26h-8z" fill={C.blue} /><path d="M0 0h18v26H0z" fill={C.grey} /></Svg>
        </ToolButton>
        <Spring />
        <ToolButton label="预 览">
          <Svg w={24} h={24}><path d="M0 0h24v24H0z" fill="#4eb1a8" /><path d="M9 7l7 5-7 5z" fill="#fff" /></Svg>
        </ToolButton>
        <ToolButton label="共 享">
          <Svg w={34} h={24}>
            <path d="M8 24a7.5 7.5 0 0 1-1-14.5A10 10 0 0 1 26 9.500 7.500 7.500 0 0 1 26 24z" fill={C.blue} />
            <path d="M17 20v-9M12 15l5-5 5 5" stroke="#fff" strokeWidth="2.5" />
          </Svg>
        </ToolButton>
        <ToolButton label="发 布" w={54} drop>
          <Svg w={30} h={24}>
            <path d="M0 0h26v4H0z" fill="#d500b5" /><path d="M0 5h26v19H0z" fill={C.grey} />
            <path d="M13 9v10M8 15l5 5 5-5" stroke="#fff" strokeWidth="2.5" />
          </Svg>
        </ToolButton>
        <Divider $x={14} />
        <Account>
          <Svg w={22} h={18}>
            <circle cx="13" cy="5" r="4.5" fill={C.mid} /><path d="M5 17c0-5 2-6 4-6h7c3 0 4 2 4 6z" fill={C.mid} />
          </Svg>
          <AccountName>1214901165</AccountName>
          <Svg w={14} h={8}><path d="M1 1l6 6 6-6" stroke="#777" strokeWidth="1.3" /></Svg>
        </Account>
      </ToolBar>

      <FormatBar>
        <Pick id="style" value="Primary Button" w={187} />
        <Svg w={20} h={17}>
          <path d="M2 1h8l3 3v12H2z" fill="#fff" stroke={C.mid} />
          <path d="M4 5h6M4 8h7M4 11h7M4 13.5h7" stroke={C.blue} strokeWidth="1.5" />
          <path d="M18 5l-6 9" stroke={C.dark} strokeWidth="2.5" />
        </Svg>
        <FormatRule />
        <Pick id="font" value="Arial" w={125} />
        <Pick id="weight" value="Normal" w={113} pad={8} plain />
        <Pick id="size" value="13" w={43} />
        <Segments>
          <Segment>B</Segment>
          <Segment><Serif>I</Serif></Segment>
          <Segment><u>U</u></Segment>
        </Segments>
        <Drop name="text color">
          <Svg w={16} h={18}>
            <text x="8" y="12" textAnchor="middle" fontFamily="Liberation Sans" fontWeight="700" fontSize="14" fill={C.dark}>A</text>
            <path d="M0 14h16v4H0z" fill="#1a1a1a" />
          </Svg>
        </Drop>
        <Segments>
          <Segment aria-label="bullets">
            <Svg w={17} h={12}>
              <path d="M5 2h11M5 9h11" stroke={C.dark} strokeWidth="2" />
              <path d="M0 1.5h3M0 9.5h3" stroke={C.blue} strokeWidth="2.5" />
            </Svg>
          </Segment>
        </Segments>
        <FormatRule />
        <Segments>
          <Segment aria-label="align left"><Lines rows={[[1, 2, 12], [1, 8, 8], [1, 14, 15]]} /></Segment>
          <Segment $on aria-label="align center"><Lines rows={[[2, 2, 13], [5, 8, 7], [1, 14, 15]]} /></Segment>
          <Segment aria-label="align right"><Lines rows={[[5, 2, 11], [9, 8, 7], [1, 14, 15]]} /></Segment>
        </Segments>
        <Segments>
          <Segment aria-label="align top"><Lines rows={[[2, 2, 13], [2, 7, 13]]} /></Segment>
          <Segment $on aria-label="align middle"><Lines rows={[[2, 6, 13], [2, 11, 13]]} /></Segment>
          <Segment aria-label="align bottom"><Lines rows={[[2, 9, 13], [2, 14, 13]]} /></Segment>
        </Segments>
        <FormatRule />
        <Drop name="fill">
          <Svg w={16} h={16}><path d="M.5 .5h15v15H.5z" fill={C.blue} stroke={C.mid} /></Svg>
        </Drop>
        <Drop name="shadow">
          <Svg w={16} h={16}>
            <path d="M4 4h11v11H4z" fill="#777" /><path d="M1 1h12v12H1z" fill="#b3b3b3" stroke="#c0c0c0" />
          </Svg>
        </Drop>
        <FormatRule />
        <Drop name="line color">
          <Svg w={18} h={16}>
            <path d="M1 14h16" stroke={C.dark} strokeWidth="3" /><path d="M5 11L14 2" stroke={C.dark} strokeWidth="3" />
          </Svg>
        </Drop>
        <Drop name="line width">
          <Svg w={16} h={16}>
            <path d="M0 0h16v5H0zM0 8h16v3H0zM0 14h16v1H0z" fill={C.dark} />
          </Svg>
        </Drop>
        <Drop name="line style">
          <Svg w={16} h={16}>
            <path d="M0 2h16" stroke={C.dark} strokeWidth="2" strokeDasharray="4 2" />
            <path d="M0 8h16" stroke={C.dark} strokeWidth="2" strokeDasharray="2 1" />
            <path d="M0 14.5h16" stroke={C.dark} strokeWidth="1" strokeDasharray="6 1" />
          </Svg>
        </Drop>
        <Drop name="arrow style" off>
          <Svg w={16} h={16}>
            <path d="M0 2.5h15M0 8.5h15M0 13.5h15M3 1v3M11 7v3M3 12v3M13 12v3" stroke="#b5b5b5" />
          </Svg>
        </Drop>
        <FormatRule $wide />
        {coords.map(([name, value]) => (
          <React.Fragment key={name}>
            {name === "h" && (
              <Ratio>
                <Svg w={16} h={12}>
                  <path d="M6 1.5H1.5v9H6M10 1.5h4.5v9H10" stroke={C.dark} strokeWidth="2.5" />
                </Svg>
              </Ratio>
            )}
            <Coord>
              {name}:
              <CoordField defaultValue={value} />
            </Coord>
          </React.Fragment>
        ))}
        <Hide>
          <Tick type="checkbox" />
          隐 藏
        </Hide>
      </FormatBar>

      <Work>
        <Side>
          <Panel $h={285}>
            <Head title="页面">
              <HeadButton aria-label="add page"><AddPageIcon /></HeadButton>
              <HeadButton aria-label="add folder"><AddFolderIcon /></HeadButton>
              <HeadButton aria-label="search"><SearchIcon /></HeadButton>
            </Head>
            <TreeRow $on $bold $gap={12}><Tri /><PageIcon />index</TreeRow>
            {["page1", "page2", "page3"].map((name) => (
              <TreeRow key={name} $level={52}><PageIcon />{name}</TreeRow>
            ))}
          </Panel>
          <Panel $h={286}>
            <Head title="元件库">
              <HeadButton aria-label="menu">
                <Svg w={14} h={14}><path d="M0 1h13M0 5h13M0 9h13M0 13h13" stroke={C.mid} strokeWidth="2" /></Svg>
              </HeadButton>
              <HeadButton aria-label="search"><SearchIcon /></HeadButton>
            </Head>
            <LibraryPick>
              <Pick id="library" value="Default" w={0} h={28} size={14} pad={5} plain fill caret="#000" />
            </LibraryPick>
            <LibraryBody>
              <LibraryGrid>
                <LibraryItem>
                  <LibraryIcon>
                    <Svg w={35} h={35}>
                      <path d="M.5 .5h34v34H.5z" fill="#fff" stroke="#cfcfcf" />
                      <path d="M1 29h33v5H1z" fill="#c9c9c9" />
                      <circle cx="22" cy="9" r="5" fill="#c9c9c9" />
                      <path d="M1 29V18l9-6 13 8 11-7v16z" fill="#009bdb" />
                    </Svg>
                  </LibraryIcon>
                  图片
                </LibraryItem>
                <LibraryItem>
                  <LibraryIcon>
                    <Svg w={35} h={25}><path d="M.5 .5h34v24H.5zL34.5 24.5M34.5 .5L.5 24.5" stroke="#8f8f8f" /></Svg>
                  </LibraryIcon>
                  占位符
                </LibraryItem>
                <LibraryItem><LibraryIcon><MiniButton $kind="plain">BUTTON</MiniButton></LibraryIcon>按钮</LibraryItem>
                <LibraryItem><LibraryIcon><MiniButton $kind="primary">BUTTON</MiniButton></LibraryIcon>主要按钮</LibraryItem>
                <LibraryItem><LibraryIcon><MiniButton $kind="link">BUTTON</MiniButton></LibraryIcon></LibraryItem>
                <LibraryItem><LibraryIcon><Heading1>H1</Heading1></LibraryIcon></LibraryItem>
              </LibraryGrid>
              <Bar len={17} gap={19} />
            </LibraryBody>
          </Panel>
          <Panel>
            <Head title="母版">
              <HeadButton aria-label="add master"><AddPageIcon /></HeadButton>
              <HeadButton aria-label="add folder"><AddFolderIcon /></HeadButton>
              <HeadButton aria-label="search"><SearchIcon /></HeadButton>
            </Head>
          </Panel>
        </Side>

        <Center>
          <TabStrip>
            <PageTab>
              index
              <Svg w={9} h={9}><path d="M1 1l7 7M8 1L1 8" stroke="#b0b0b0" strokeWidth="2.5" /></Svg>
            </PageTab>
            <Spring />
            <Caret />
          </TabStrip>
          <Board>
            <RulerAcross>
              {range(cells.across).map((value) => <RulerSegment key={value} value={value} />)}
            </RulerAcross>
            <RulerDown>
              {range(cells.down).map((value) => <RulerSegment key={value} value={value} down />)}
            </RulerDown>
            <Canvas>
              <Shape>
                BUTTON
                {handles.map(([x, y]) => <Handle key={x + y} $x={x} $y={y} />)}
                <Knob $x={2} $y={-15} width={10} height={10} viewBox="0 0 10 10">
                  <path d="M.5 .5h9L5 9.5z" fill="#ffc800" stroke="#000" />
                </Knob>
                <Knob $x={151} $y={-19} width={12} height={12} viewBox="0 0 12 12">
                  <circle cx="6" cy="6" r="5" fill="#b8b8b8" stroke="#222" strokeWidth="1.3" />
                </Knob>
                <Note>1</Note>
              </Shape>
            </Canvas>
            <ScrollSlot><Bar len={22} /></ScrollSlot>
            <ScrollSlot $across><Bar across len={69} grip /></ScrollSlot>
            <ScrollCorner />
          </Board>
        </Center>

        <Side $right>
          <Panel $h={428}>
            <Head title="检视: 矩形">
              <HeadButton aria-label="page">
                <Svg w={14} h={16}>
                  <path d="M1.5 1.5h7l4 4v9h-11z" stroke={C.mid} strokeWidth="2.5" />
                  <path d="M8 1v5h5" stroke={C.mid} strokeWidth="1.5" />
                </Svg>
              </HeadButton>
            </Head>
            <NameRow>
              1
              <NameField placeholder="(矩形名称)" />
            </NameRow>
            <Tabs>
              <TabButton $on><span /><span>属性</span><Star>*</Star></TabButton>
              <TabButton><span /><span>说明</span></TabButton>
              <TabButton><span /><span>样式</span></TabButton>
            </Tabs>
            <InspectorBody>
              <InspectorMain>
                <Properties>
                  <SectionRow>
                    <Svg w={11} h={8}><path d="M1 1l4.5 4.500L10 1" stroke="#666" strokeWidth="2.3" /></Svg>
                    交互
                  </SectionRow>
                  <AddCase href="#">
                    <Svg w={14} h={14}><path d="M7 0v14M0 7h14" stroke="#72b52b" strokeWidth="4" /></Svg>
                    <LinkText>添加用例</LinkText>
                  </AddCase>
                  <Highlight>
                    <TreeRow $level={1} $gap={8}><Tri /><EventIcon /><CaseText $gap={4}>鼠标单击 时</CaseText></TreeRow>
                    <TreeRow $level={24} $gap={7}><Tri /><CaseIcon /><CaseText $gap={4}>Case 1</CaseText></TreeRow>
                    <TreeRow $level={66} $gap={10}>
                      <Svg w={16} h={20}><path d="M3 0h12l-4 7h4L3 20l3-9H0z" fill={C.dark} /></Svg>
                      <CaseText>在 <Em>当前窗口</Em> 打开 <Em>page1</Em></CaseText>
                    </TreeRow>
                  </Highlight>
                  <TreeRow $level={37} $gap={8}><EventIcon /><CaseText $gap={4}>鼠标移入 时</CaseText></TreeRow>
                  <TreeRow $level={37} $gap={8}><EventIcon /><CaseText $gap={4}>鼠标移出 时</CaseText></TreeRow>
                  <MoreEvents>更多事件&gt;&gt;&gt;</MoreEvents>
                  <Rule />
                </Properties>
                <Bar across len={196} grip />
              </InspectorMain>
              <InspectorScroll>
                <Bar len={90} grip />
                <ScrollCorner />
              </InspectorScroll>
            </InspectorBody>
          </Panel>
          <Panel>
            <Head title="概要: 页面">
              <HeadButton aria-label="filter">
                <Svg w={17} h={16}>
                  <path d="M1 1.5h14L9.5 8v7l-3-2V8z" stroke={C.mid} strokeWidth="2" />
                  <path d="M13.5 15V8M11 10l2.5-2.5L16 10" stroke={C.mid} strokeWidth="1.5" />
                </Svg>
              </HeadButton>
              <HeadButton aria-label="search"><SearchIcon /></HeadButton>
            </Head>
            <TreeRow $level={7} $bold $gap={12}><PageIcon />index</TreeRow>
            <TreeRow $level={25} $on $gap={8}>
              <Svg w={20} h={5}><path d="M.5 .5h19v4H.5z" fill="#fff" stroke="#777" /></Svg>
              (矩形)
            </TreeRow>
          </Panel>
        </Side>
      </Work>
    </Window>
  );
}
